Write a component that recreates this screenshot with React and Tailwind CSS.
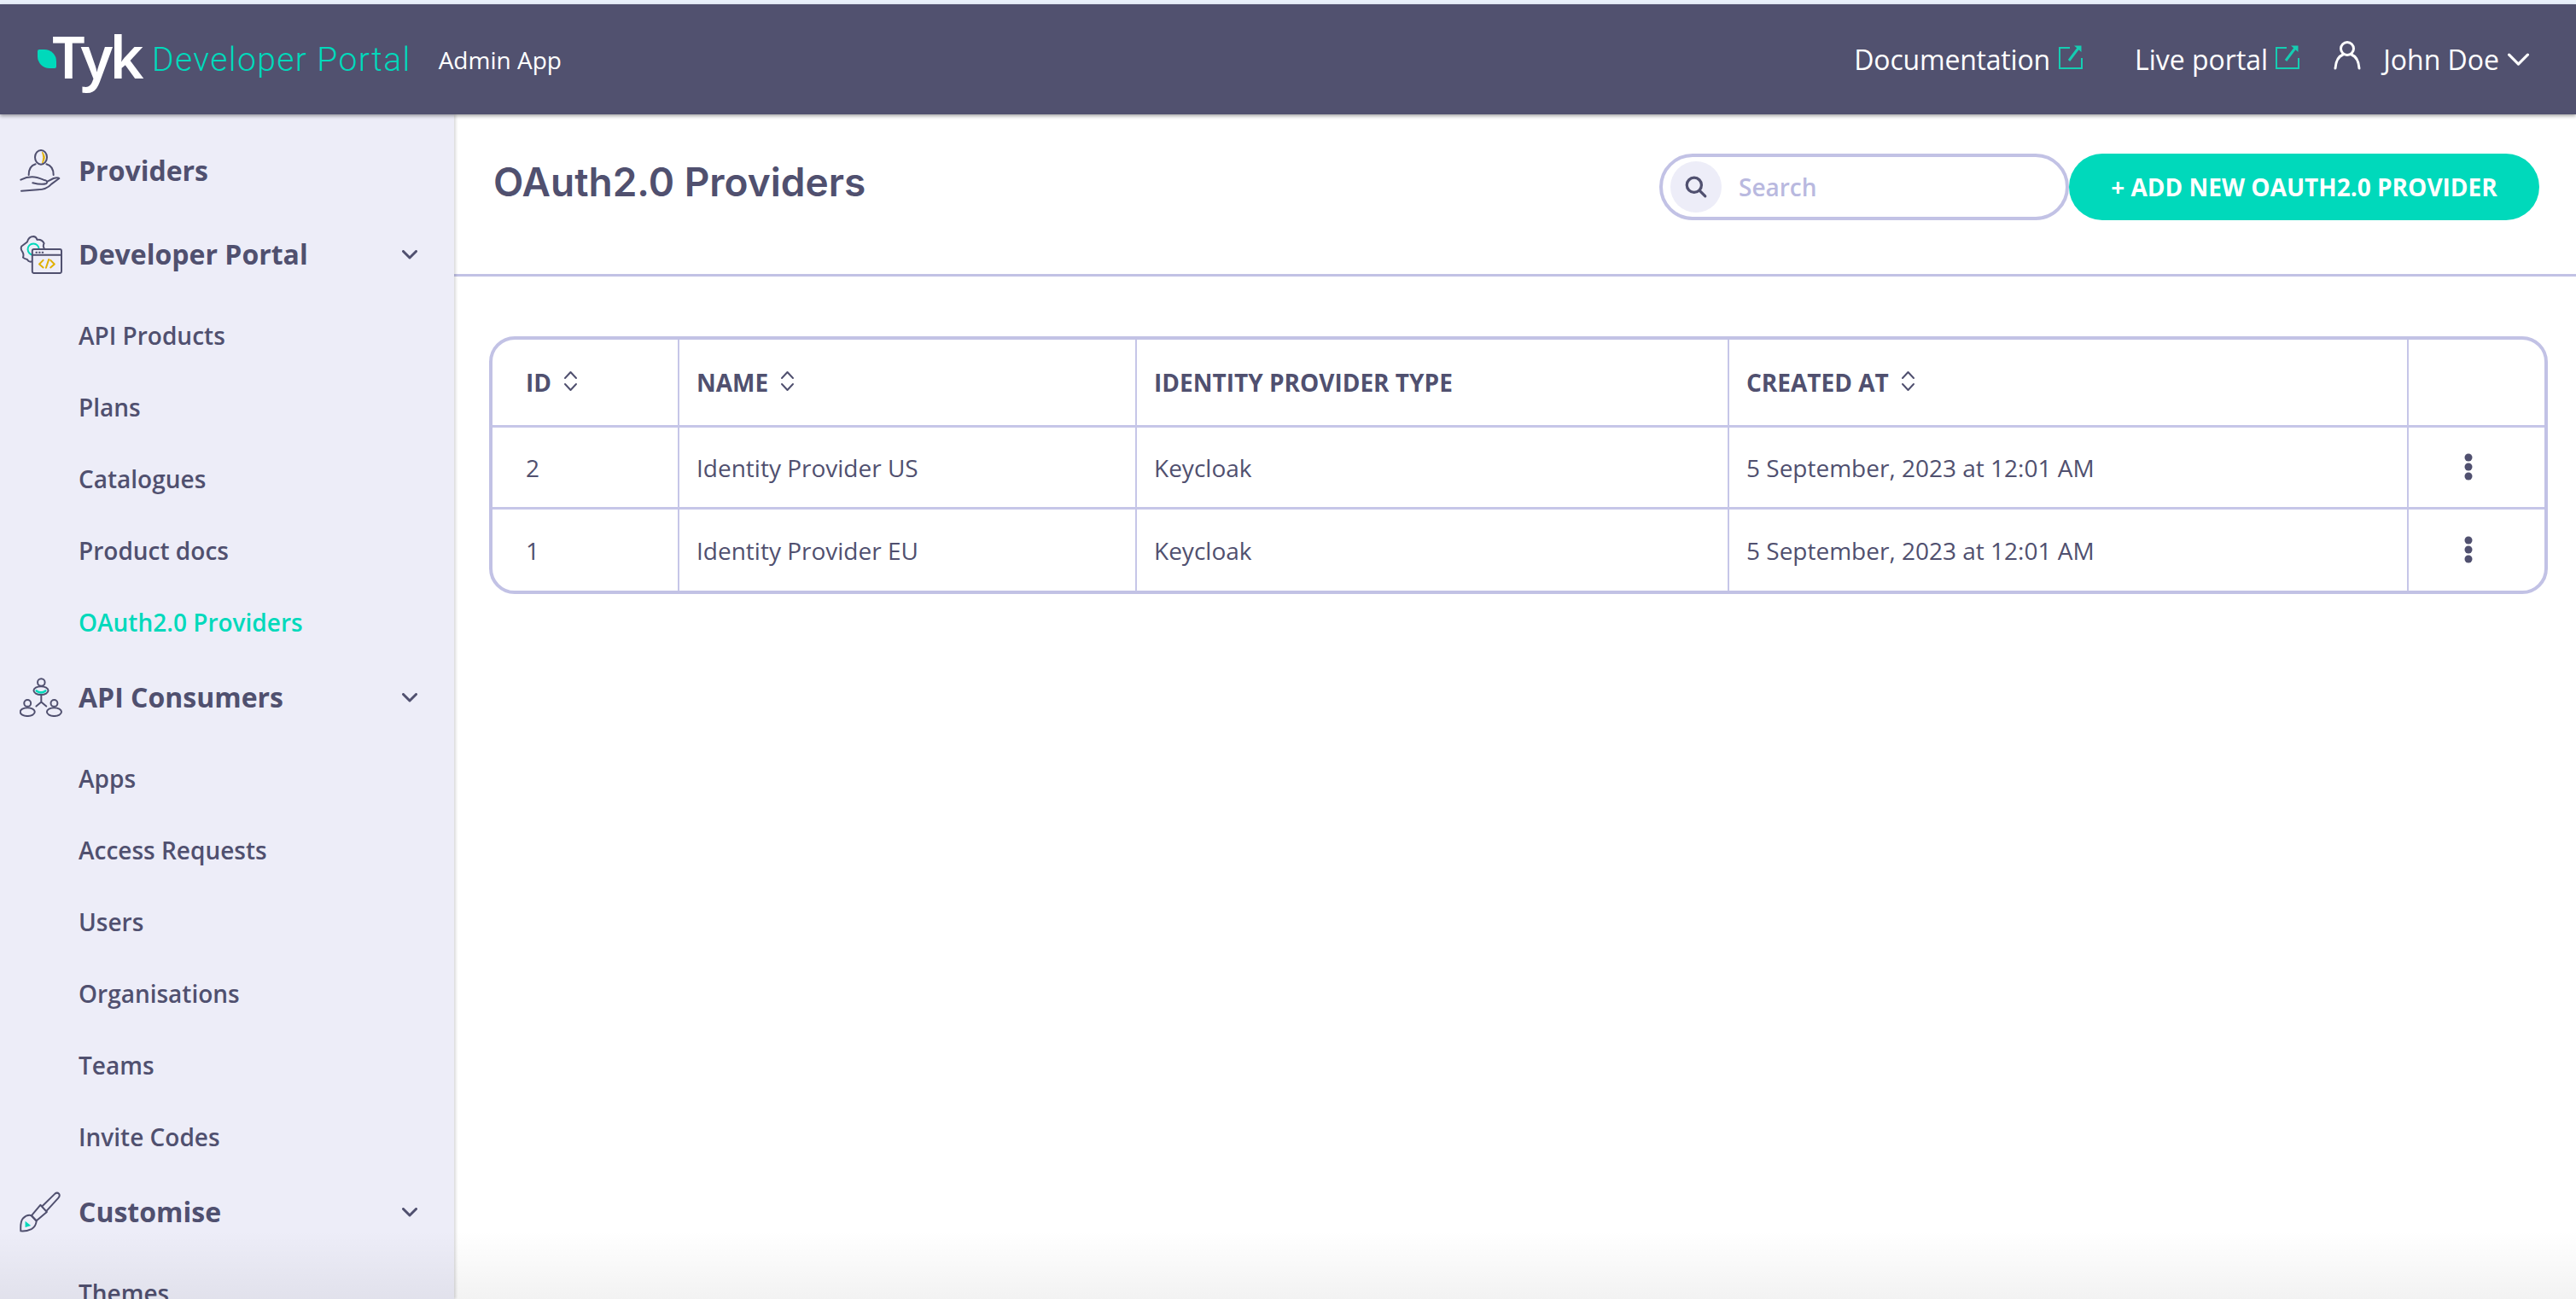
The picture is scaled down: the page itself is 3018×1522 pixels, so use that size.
// App.jsx - Tyk developer portal admin, OAuth2.0 providers list
import React from "react";

const MENU = [
  { label: "Providers", icon: "providers" },
  {
    label: "Developer Portal",
    icon: "portal",
    open: true,
    items: ["API Products", "Plans", "Catalogues", "Product docs", "OAuth2.0 Providers"],
  },
  {
    label: "API Consumers",
    icon: "consumers",
    open: true,
    items: ["Apps", "Access Requests", "Users", "Organisations", "Teams", "Invite Codes"],
  },
  { label: "Customise", icon: "brush", open: true, items: ["Themes"] },
];

const ROWS = [
  { id: 2, name: "Identity Provider US", type: "Keycloak", created: "5 September, 2023 at 12:01 AM" },
  { id: 1, name: "Identity Provider EU", type: "Keycloak", created: "5 September, 2023 at 12:01 AM" },
];

/* =========================
   ICONS
========================= */
function ProvidersIcon() {
  return (
    <svg width="48" height="52" viewBox="66 45 144 156" fill="none" stroke="#50506f" strokeWidth="6" strokeLinecap="round" strokeLinejoin="round">
      <ellipse cx="141" cy="76" rx="21" ry="25" />
      <path d="M146 58 Q162 76 146 96 Q153 76 146 58Z" fill="#e0b000" stroke="#e0b000" strokeWidth="3" />
      <path d="M122 100 C105 105 98 118 98 138 M160 100 C178 105 185 118 185 138" />
      <path d="M70 155 Q90 145 110 145 Q125 145 150 155 Q168 158 160 168 Q145 174 112 166" />
      <path d="M72 194 Q100 192 130 190 Q160 190 178 170 L205 150 Q200 145 185 150 L165 160" />
    </svg>
  );
}

function PortalIcon() {
  return (
    <svg width="50" height="46" viewBox="68 345 152 138" fill="none" stroke="#50506f" strokeWidth="6" strokeLinecap="round" strokeLinejoin="round">
      <path d="M110 440 Q100 442 95 432 Q85 430 80 425 Q84 415 78 405 Q70 395 75 385 Q85 378 95 370 Q100 350 118 350 Q128 352 130 362 Q148 360 155 375 Q150 385 155 392" />
      <circle cx="117" cy="396" r="20" stroke="#00d9bb" />
      <rect x="113" y="396" width="104" height="85" rx="6" fill="#ededf8" />
      <path d="M113 416 H217" />
      <path d="M127 407 H129 M138 407 H140 M149 407 H151" />
      <path d="M152 435 L138 449 L152 461 M178 435 L192 449 L178 461 M172 432 L162 462" stroke="#e0b000" />
    </svg>
  );
}

function ConsumersIcon() {
  return (
    <svg width="50" height="46" viewBox="68 42 152 138" fill="none" stroke="#50506f" strokeWidth="6" strokeLinecap="round" strokeLinejoin="round">
      <circle cx="145" cy="58" r="13" />
      <ellipse cx="144" cy="87" rx="26" ry="15" />
      <path d="M128 88 Q144 100 160 88" stroke="#00d9bb" strokeWidth="8" />
      <circle cx="96" cy="132" r="12" />
      <ellipse cx="96" cy="163" rx="26" ry="15" />
      <circle cx="191" cy="132" r="12" />
      <ellipse cx="191" cy="163" rx="26" ry="15" />
      <path d="M145 105 V128 L127 143 M145 128 L163 143" />
    </svg>
  );
}

function BrushIcon() {
  return (
    <svg width="48" height="48" viewBox="68 44 146 146" fill="none" stroke="#50506f" strokeWidth="6" strokeLinecap="round" strokeLinejoin="round">
      <path d="M150 95 L194 52 Q202 46 208 52 Q213 60 206 67 L165 112" />
      <path d="M110 130 L142 92 L165 117 L128 148Z" />
      <path d="M72 185 Q70 150 80 140 Q95 125 110 130 L128 150 Q125 170 110 178 Q90 187 72 185Z" />
      <path d="M88 150 L88 172 L108 166Z" fill="#00d9bb" stroke="none" />
    </svg>
  );
}

function MenuIcon({ name }) {
  if (name === "providers") return <ProvidersIcon />;
  if (name === "portal") return <PortalIcon />;
  if (name === "consumers") return <ConsumersIcon />;
  return <BrushIcon />;
}

function ChevronDown({ className, stroke = "#50506f", width = 3 }) {
  return (
    <svg className={className} viewBox="0 0 18 11" fill="none" stroke={stroke} strokeWidth={width} strokeLinecap="round" strokeLinejoin="round">
      <path d="M1.5 1.5 L9 9 L16.5 1.5" />
    </svg>
  );
}

function ExternalIcon() {
  return (
    <svg width="28" height="29" viewBox="0 0 28 29" fill="none" stroke="#15cdb2" strokeWidth="2" className="mt-[-6px]">
      <path d="M13 4 H1 V28 H27 V16" />
      <path d="M12 19 L24 3" strokeWidth="3" />
      <path d="M18 1.5 H26.5 V9 Z" fill="#15cdb2" stroke="none" />
    </svg>
  );
}

function SortIcon() {
  return (
    <svg width="17" height="25" viewBox="0 0 17 25" fill="none" stroke="#50506f" strokeWidth="2" strokeLinecap="round" strokeLinejoin="round">
      <path d="M2 9 L8.5 2 L15 9" />
      <path d="M2 16 L8.5 23 L15 16" />
    </svg>
  );
}

function DotsIcon() {
  return (
    <svg width="10" height="32" viewBox="0 0 10 32" fill="#50506f">
      <circle cx="5" cy="5" r="4.5" />
      <circle cx="5" cy="16" r="4.5" />
      <circle cx="5" cy="27" r="4.5" />
    </svg>
  );
}

/* =========================
   LAYOUT
========================= */
function Header() {
  return (
    <header className="flex items-center h-[129px] shrink-0 bg-[#51516f] shadow-[0_2px_4px_rgba(0,0,0,0.35)] relative z-10 text-white">
      <div className="w-[22px] h-[22px] ml-[44px] mt-[-2px] bg-[#00d9bb] rounded-tl-[2px] rounded-tr-[14px] rounded-bl-[14px] rounded-br-[2px]" />
      <span className="ml-[-5px] text-[68px] leading-none font-['Noto_Sans',sans-serif] font-semibold tracking-[-3.5px] mt-[-8px]">Tyk</span>
      <span className="ml-[13px] text-[39px] leading-none font-['Roboto',sans-serif] font-light tracking-[1.4px] text-[#00d9bb] mt-[2px]">Developer Portal</span>
      <span className="ml-[32px] text-[28px] mt-[1px]">Admin App</span>

      <div className="ml-auto flex items-center text-[32px] pr-[53px]">
        <span className="tracking-[-0.2px]">Documentation</span>
        <span className="ml-[10px]"><ExternalIcon /></span>
        <span className="ml-[61px]">Live portal</span>
        <span className="ml-[9px]"><ExternalIcon /></span>
        <svg className="ml-[40px] mt-[-10px]" width="32" height="34" viewBox="0 0 32 34" fill="none" stroke="#fff" strokeWidth="3" strokeLinecap="round">
          <circle cx="16" cy="9" r="7.5" />
          <path d="M2 32 Q3 19 11 16 M30 32 Q29 19 21 16" />
        </svg>
        <span className="ml-[26px]">John Doe</span>
        <ChevronDown className="ml-[8px] w-[29px] h-[16px]" stroke="#fff" width={2.2} />
      </div>
    </header>
  );
}

function Sidebar() {
  return (
    <aside className="w-[532px] shrink-0 bg-[#ededf8] pt-[20px] shadow-[2px_0_3px_rgba(0,0,0,0.15)] relative text-[#50506f]">
      {MENU.map((m) => (
        <div key={m.label} className={m.items ? "" : "mb-[6px]"}>
          <div className="relative flex items-center h-[92px] pl-[92px]">
            <span className="absolute left-[23px] top-1/2 -translate-y-1/2 flex">
              <MenuIcon name={m.icon} />
            </span>
            <span className="text-[32px] font-bold">{m.label}</span>
            {m.open && <ChevronDown className="absolute left-[471px] top-[41px] w-[18px] h-[11px]" />}
          </div>
          {m.items && (
            <ul className="pt-[7px]">
              {m.items.map((it) => (
                <li
                  key={it}
                  className={
                    "flex items-center h-[84px] pl-[92px] text-[28px] font-semibold " +
                    (it === "OAuth2.0 Providers" ? "text-[#00d9bb]" : "")
                  }
                >
                  {it}
                </li>
              ))}
            </ul>
          )}
        </div>
      ))}
    </aside>
  );
}

function SortHead({ children }) {
  return (
    <span className="flex items-center gap-[14px]">
      {children}
      <span className="flex mt-[-4px]"><SortIcon /></span>
    </span>
  );
}

function ProvidersTable() {
  const th = "border-r-2 border-b-[3px] border-[#c6c6e8] text-left font-bold text-[28px] uppercase align-middle pl-[20px]";
  const td = "border-r-2 border-[#c6c6e8] text-[28px] pl-[20px] align-middle";
  return (
    <div className="w-[2412px] rounded-[30px] border-[4px] border-[#c2c2e5] overflow-hidden">
      <table className="w-full table-fixed border-separate border-spacing-0">
        <colgroup>
          <col className="w-[219px]" />
          <col className="w-[536px]" />
          <col className="w-[694px]" />
          <col className="w-[796px]" />
          <col />
        </colgroup>
        <thead>
          <tr className="h-[103px]">
            <th className={th + " !pl-[39px]"}><SortHead>ID</SortHead></th>
            <th className={th}><SortHead>Name</SortHead></th>
            <th className={th}>Identity provider type</th>
            <th className={th}><SortHead>Created at</SortHead></th>
            <th className="border-b-[3px] border-[#c6c6e8]" />
          </tr>
        </thead>
        <tbody>
          {ROWS.map((r, i) => {
            const line = i === 0 ? " border-b-[3px]" : "";
            return (
              <tr key={r.id} className={i === 0 ? "h-[96px]" : "h-[95px]"}>
                <td className={td + line + " !pl-[39px]"}>{r.id}</td>
                <td className={td + line}>{r.name}</td>
                <td className={td + line}>{r.type}</td>
                <td className={td + line}>{r.created}</td>
                <td className={"border-[#c6c6e8]" + line}>
                  <span className="flex justify-center pr-[20px] mt-[-2px]"><DotsIcon /></span>
                </td>
              </tr>
            );
          })}
        </tbody>
      </table>
    </div>
  );
}

export default function App() {
  return (
    <div className="relative flex flex-col h-[1522px] overflow-hidden bg-white font-['Open_Sans',sans-serif] text-[#50506f]">
      <div className="h-[5px] shrink-0 bg-[#e8effa]" />
      <Header />
      <div className="flex flex-1 min-h-0">
        <Sidebar />
        <main className="flex-1 min-w-0">
          <div className="flex items-start h-[190px] pt-[46px] pl-[46px] pr-[43px] border-b-[3px] border-[#c2c2e5]">
            <h1 className="text-[46px] leading-[60px] mt-[3px] font-semibold font-['Inter',sans-serif]">OAuth2.0 Providers</h1>
            <div className="ml-auto flex items-center h-[78px] w-[480px] rounded-full border-[4px] border-[#c2c2e5] pl-[9px]">
              <span className="flex items-center justify-center w-[60px] h-[60px] rounded-full bg-[#ededf8]">
                <svg width="28" height="28" viewBox="0 0 26 26" fill="none" stroke="#50506f" strokeWidth="3" strokeLinecap="round">
                  <circle cx="11" cy="11" r="8" />
                  <path d="M17 17 L23 23" />
                </svg>
              </span>
              <span className="ml-[20px] text-[28px] font-semibold text-[#b9b9df]">Search</span>
            </div>
            <button className="flex items-center justify-center h-[78px] w-[551px] rounded-full bg-[#00d9bb] text-white text-[28px] font-bold uppercase">
              + Add new OAuth2.0 provider
            </button>
          </div>
          <div className="pt-[70px] pl-[41px]">
            <ProvidersTable />
          </div>
        </main>
      </div>
      {/* sombra embaixo da janela */}
      <div className="absolute left-0 right-0 bottom-0 h-[80px] bg-gradient-to-b from-transparent to-black/5 pointer-events-none" />
    </div>
  );
}
